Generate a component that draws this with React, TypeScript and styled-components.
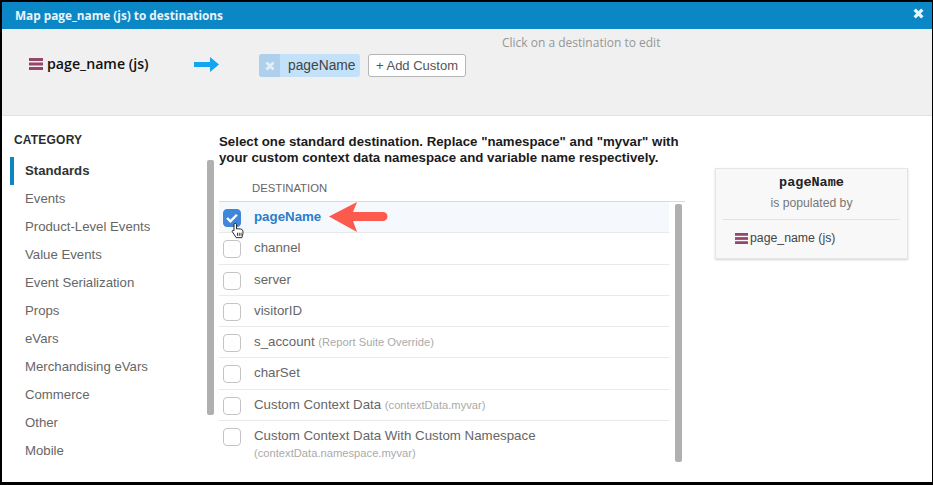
import React from "react";
import styled, { createGlobalStyle } from "styled-components";

const Global = createGlobalStyle`
  html, body { margin: 0; padding: 0; background: #000; }
  body { width: 933px; height: 485px; overflow: hidden; font-family: "Liberation Sans", Arial, sans-serif; }
  #root { height: 485px; }
`;

const Frame = styled.div`
  box-sizing: border-box; width: 933px; height: 485px; padding: 2px 1px 3px 2px; background: #000;
`;
const Modal = styled.div`
  height: 100%; background: #fff; display: flex; flex-direction: column; overflow: hidden;
`;
const TitleBar = styled.header`
  height: 27px; flex: none; background: #0c87c5; display: flex; align-items: center; justify-content: space-between;
  padding: 0 8px 0 13px; color: #fff; font: 700 11.8px "Open Sans", sans-serif; box-shadow: 0 1px 2px rgba(0,0,0,.25); position: relative;
`;
const TitleText = styled.span`color: #eaf5fb; position: relative; top: -1px;`;
const Close = styled.svg`width: 11px; height: 11px; display: block; position: relative; top: -2px;`;

const MapPanel = styled.section`
  height: 87px; flex: none; background: #f0f0f0; border-bottom: 1px solid #e2e2e2; box-sizing: border-box;
  display: flex; align-items: flex-start; position: relative;
`;
const Source = styled.div`
  margin: 25px 0 0 27px; width: 165px; display: flex; align-items: center; gap: 4px;
  font: 600 14.2px "Open Sans", sans-serif; color: #111; white-space: nowrap;
`;
const MapArrow = styled.svg`width: 26px; height: 16px; margin: 28px 0 0 0; flex: none;`;
const Chip = styled.div`
  margin: 25px 0 0 39px; height: 23px; width: 101px; flex: none; display: flex; align-items: center; background: #c3e2f9; border-radius: 3px;
  overflow: hidden; font-size: 13.8px; color: #444;
`;
const ChipX = styled.span`
  width: 21px; height: 100%; background: #aed0ec; display: flex; align-items: center; justify-content: center; margin-right: 8px; flex: none;
`;
const AddButton = styled.div`
  margin: 25px 0 0 8px; box-sizing: border-box; width: 98px; height: 23px; flex: none; background: #fff; border: 1px solid #b5b5b5; border-radius: 3px;
  display: flex; align-items: center; justify-content: center; font-size: 13px; color: #555;
`;
const Hint = styled.div`
  margin: 5px 0 0 36px; font: 400 12px "Open Sans", sans-serif; color: #969696; white-space: nowrap;
`;

const Body = styled.div`flex: 1; min-height: 0; display: flex; overflow: hidden;`;
const Sidebar = styled.aside`width: 205px; flex: none; padding: 17px 0 0 8px; box-sizing: border-box;`;
const SideHead = styled.div`font-size: 12px; line-height: 14px; font-weight: 700; color: #2c2c2c; padding-left: 4px; margin-bottom: 10px; letter-spacing: .2px;`;
const SideItem = styled.div<{ $active?: boolean }>`
  height: 28px; line-height: 28.6px; font-size: 13.2px; color: ${p => (p.$active ? "#333" : "#666")};
  font-weight: ${p => (p.$active ? 700 : 400)}; padding-left: 11px; white-space: nowrap;
  border-left: 4px solid ${p => (p.$active ? "#0c87c5" : "transparent")}; box-sizing: border-box; width: 197px;
`;
const SideTrack = styled.div`width: 7px; flex: none; padding-top: 44px; margin-right: 5px;`;
const Thumb = styled.div<{ $h: number }>`width: 7px; height: ${p => p.$h}px; background: #b0b0b0; border-radius: 2px;`;

const Main = styled.main`width: 466px; flex: none; padding-top: 18px; box-sizing: border-box; margin-right: 30px; overflow: hidden;`;
const Lead = styled.p`margin: 0; font-size: 13.25px; line-height: 15.5px; font-weight: 700; color: #1b1b1b; white-space: nowrap;`;
const ColHead = styled.div`margin-top: 17px; padding-left: 33px; font-size: 11.3px; line-height: 13px; color: #666; height: 19px; border-bottom: 1px solid #d5dce2;`;
const ListWrap = styled.div`display: flex; height: 260px; align-items: flex-start;`;
const List = styled.div`width: 450px; flex: none; height: 259px; overflow: hidden;`;
const Row = styled.div<{ $sel?: boolean; $h?: number }>`
  height: ${p => p.$h ?? 31.25}px; box-sizing: border-box; border-bottom: 1px solid #eaeaea; background: ${p => (p.$sel ? "#f5f9fd" : "#fff")};
  display: flex; padding: 7px 0 0 4px; position: relative; z-index: ${p => (p.$sel ? 1 : 0)};
`;
const Check = styled.span<{ $on?: boolean }>`
  width: 18px; height: 18px; box-sizing: border-box; flex: none; border-radius: 4px;
  background: ${p => (p.$on ? "#3f86d8" : "#fff")}; border: 1px solid ${p => (p.$on ? "#3f86d8" : "#c4c4c4")};
  display: flex; align-items: center; justify-content: center;
`;
const Label = styled.div<{ $on?: boolean }>`
  margin: -1px 0 0 13px; font-size: 13.3px; line-height: 17px; white-space: nowrap;
  color: ${p => (p.$on ? "#2d7ccb" : "#666")}; font-weight: ${p => (p.$on ? 700 : 400)};
`;
const Sub = styled.span`font-size: 11.2px; color: #aaa;`;
const SubLine = styled.div`font-size: 11.2px; color: #aaa; line-height: 18px;`;
const Pointer = styled.svg`position: absolute; left: 108px; top: 0px; width: 62px; height: 31px;`;
const Hand = styled.svg`position: absolute; left: 11px; top: 20px; width: 15px; height: 17px;`;
const ListTrack = styled.div`margin: 2px 0 0 6px; width: 8px;`;

const Card = styled.aside`
  margin-top: 52px; width: 193px; height: 91px; box-sizing: border-box; flex: none; background: #f8f8f8; border: 1px solid #e6e6e6;
  box-shadow: 0 1px 2px rgba(0,0,0,.18); padding: 7px 7px 0; text-align: center;
`;
const CardName = styled.div`font: 700 13.5px "Liberation Mono", monospace; color: #222; line-height: 14px;`;
const CardSub = styled.div`font-size: 12.2px; color: #777; line-height: 14px; margin-top: 6px;`;
const CardRule = styled.div`height: 1px; background: #e3e3e3; margin-top: 9px;`;
const CardRow = styled.div`display: flex; align-items: center; gap: 2px; padding: 11px 0 0 12px; font-size: 12.3px; color: #444;`;

const Hamburger = ({ size }: { size: number }) => (
  <svg width={size} height={size - 2} viewBox="0 0 14 12" preserveAspectRatio="none" style={{ flex: "none", display: "block" }}>
    <g fill="#94476b"><rect width="14" height="3" /><rect y="4.5" width="14" height="3" /><rect y="9" width="14" height="3" /></g>
  </svg>
);

const categories = ["Standards", "Events", "Product-Level Events", "Value Events", "Event Serialization", "Props", "eVars", "Merchandising eVars", "Commerce", "Other", "Mobile"];

export default function App() {
  return (
    <Frame>
      <Global />
      <Modal>
        <TitleBar>
          <TitleText>Map page_name (js) to destinations</TitleText>
          <Close viewBox="0 0 10 10"><path d="M1.5 1.5l7 7M8.5 1.5l-7 7" stroke="#eaf5fb" strokeWidth="3" /></Close>
        </TitleBar>
        <MapPanel>
          <Source><Hamburger size={14} />page_name (js)</Source>
          <MapArrow viewBox="0 0 26 16"><path d="M0 5h16V0l9 7.5-9 7.5v-5H0z" fill="#12a5f0" /></MapArrow>
          <Chip>
            <ChipX><svg width="10" height="10" viewBox="0 0 10 10"><path d="M1.5 1.5l7 7M8.5 1.5l-7 7" stroke="#e3eef7" strokeWidth="2.8" /></svg></ChipX>
            pageName
          </Chip>
          <AddButton>+ Add Custom</AddButton>
          <Hint>Click on a destination to edit</Hint>
        </MapPanel>
        <Body>
          <Sidebar>
            <SideHead>CATEGORY</SideHead>
            {categories.map((c, i) => <SideItem key={c} $active={i === 0}>{c}</SideItem>)}
          </Sidebar>
          <SideTrack><Thumb $h={255} /></SideTrack>
          <Main>
            <Lead>Select one standard destination. Replace "namespace" and "myvar" with<br />your custom context data namespace and variable name respectively.</Lead>
            <ColHead>DESTINATION</ColHead>
            <ListWrap>
              <List>
                <Row $sel>
                  <Check $on><svg width="12" height="10" viewBox="0 0 11 9"><path d="M1 4.5l3 3 6-6" fill="none" stroke="#fff" strokeWidth="2.2" /></svg></Check>
                  <Label $on>pageName</Label>
                  <Hand viewBox="0 0 15 19">
                    <path d="M5 1.5c1 0 1.4.7 1.4 1.6v4.6c2.5-.5 6.5.2 7 1.6.4 2 .2 5-1 8.2H6L1.8 11c-.8-1.2.6-2.3 1.8-1.2V3c0-1 .5-1.5 1.4-1.5z" fill="#fff" stroke="#111" strokeWidth="1" />
                    <path d="M7.5 12v3.5M9.5 12v3.5M11.5 12v3.5" stroke="#111" strokeWidth=".9" />
                  </Hand>
                  <Pointer viewBox="0 0 62 31">
                    <path d="M2 14.5 L30 0 L26 10 H56 a4.5 4.5 0 0 1 0 9 H26 L30 30z" fill="#fb5a4c" />
                  </Pointer>
                </Row>
                <Row><Check /><Label>channel</Label></Row>
                <Row><Check /><Label>server</Label></Row>
                <Row><Check /><Label>visitorID</Label></Row>
                <Row><Check /><Label>s_account <Sub>(Report Suite Override)</Sub></Label></Row>
                <Row><Check /><Label>charSet</Label></Row>
                <Row><Check /><Label>Custom Context Data <Sub>(contextData.myvar)</Sub></Label></Row>
                <Row $h={50}><Check /><Label>Custom Context Data With Custom Namespace<SubLine>(contextData.namespace.myvar)</SubLine></Label></Row>
              </List>
              <ListTrack><Thumb $h={258} /></ListTrack>
            </ListWrap>
          </Main>
          <Card>
            <CardName>pageName</CardName>
            <CardSub>is populated by</CardSub>
            <CardRule />
            <CardRow><Hamburger size={13} />page_name (js)</CardRow>
          </Card>
        </Body>
      </Modal>
    </Frame>
  );
}
